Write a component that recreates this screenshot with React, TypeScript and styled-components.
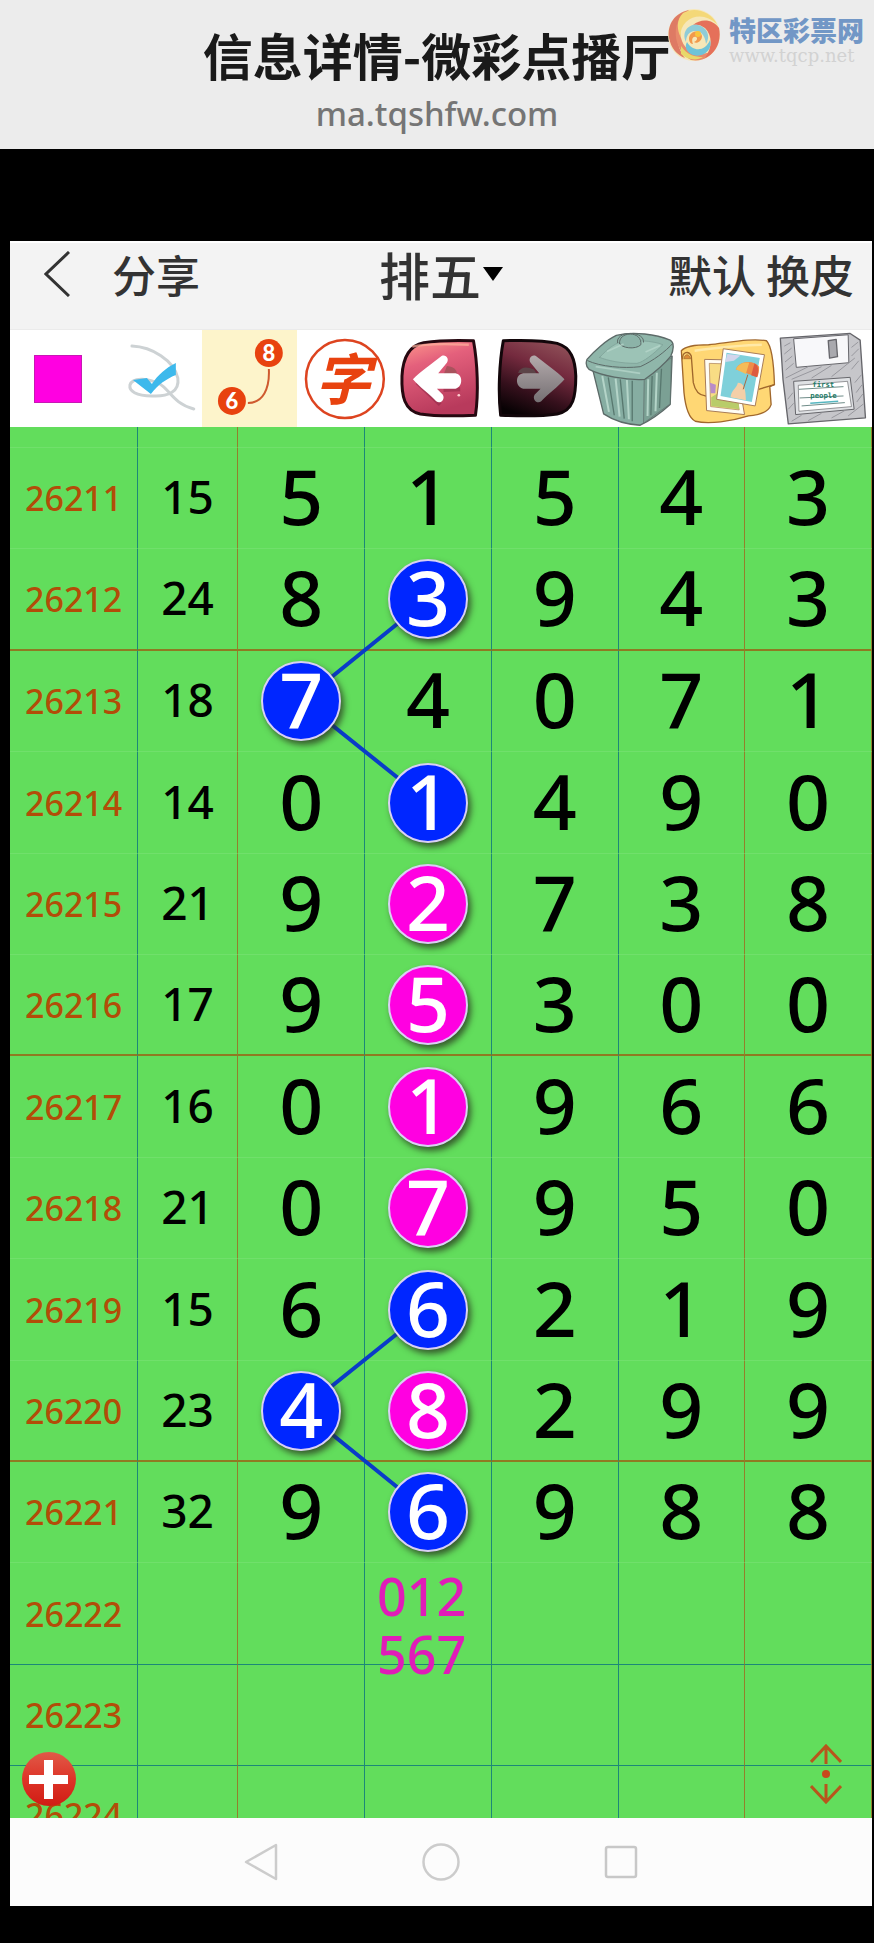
import React from "react";
import styled, { createGlobalStyle } from "styled-components";

const UI_FONT = `"Noto Sans", "Noto Sans CJK SC", sans-serif`;

const GlobalStyle = createGlobalStyle`
  * { box-sizing: border-box; }
  body { margin: 0; background: #000; font-family: ${UI_FONT}; }
  button { border: 0; padding: 0; margin: 0; background: none; font: inherit; color: inherit; cursor: pointer; }
`;

const PageHeader = styled.header`
  position: relative;
  display: flex;
  flex-direction: column;
  align-items: center;
  background: #ececec;
  padding: 22px 0 8px;
`;

const PageTitle = styled.h1`
  margin: 0;
  font-size: 50px;
  line-height: 64px;
  font-weight: 700;
  font-family: "Noto Sans CJK SC", sans-serif;
  color: #1a1a1a;
  white-space: nowrap;
`;

const PageUrl = styled.a`
  font-size: 33px;
  line-height: 55px;
  font-weight: 500;
  color: #757575;
  text-decoration: none;
`;

const Watermark = styled.div`
  position: absolute;
  top: 8px;
  right: 10px;
  display: flex;
  gap: 8px;
`;

const WatermarkText = styled.div`
  display: flex;
  flex-direction: column;
  padding-top: 6px;
`;

const WatermarkName = styled.span`
  font: 900 27px/32px "Noto Sans CJK SC", sans-serif;
  color: #7297c6;
`;

const WatermarkUrl = styled.span`
  font: 18px/20px "DejaVu Serif", serif;
  color: #d2d2d2;
`;

const Phone = styled.main`
  margin: 92px 2px 37px 10px;
  background: #fcfcfc;
`;

const TopBar = styled.nav`
  display: grid;
  grid-template-columns: 1fr auto 1fr;
  align-items: center;
  height: 89px;
  padding: 0 18px 24px;
  background: #f3f3f3;
  border-top: 2px solid #fff;
  border-bottom: 1px solid #ebebeb;
  color: #333;
  font-family: "Noto Sans CJK SC", sans-serif;
  font-size: 44px;
  font-weight: 500;
  line-height: 62px;
`;

const BarGroup = styled.div<{ $end?: boolean }>`
  display: flex;
  align-items: center;
  justify-content: ${(p) => (p.$end ? "flex-end" : "flex-start")};
  gap: ${(p) => (p.$end ? 10 : 42)}px;
  padding-left: ${(p) => (p.$end ? 0 : 16)}px;
`;

const BarButton = styled.button`
  display: flex;
  align-items: center;
  white-space: nowrap;
`;

const GameButton = styled(BarButton)`
  font-size: 51px;
  gap: 2px;
`;

const ToolBar = styled.div`
  display: grid;
  grid-template-columns: repeat(9, 1fr);
  background: #fff;
`;

const Tool = styled.button<{ $active?: boolean }>`
  display: flex;
  align-items: center;
  justify-content: center;
  height: 97px;
  background: ${(p) => (p.$active ? "#fdf4cb" : "transparent")};
  svg { display: block; width: 100%; height: 97px; }
`;

const ColorChip = styled.span`
  width: 48px;
  height: 48px;
  background: #ff00e1;
  border: 1px solid #c818b4;
`;

const Chart = styled.section`
  position: relative;
  background: #62dd5c;
  overflow: hidden;
`;

const Grid = styled.table`
  width: 100%;
  table-layout: fixed;
  border-collapse: separate;
  border-spacing: 0;
  text-align: center;
`;

const PeriodCol = styled.col`
  width: 14.8%;
`;

const SumCol = styled.col`
  width: 11.7%;
`;

const DigitCol = styled.col`
  width: 14.7%;
`;

type Line = "red" | "blue" | "soft";

const rowBorders: Record<Line, string> = {
  red: "2px solid #8f7a22",
  blue: "1px solid #1c8878",
  soft: "1px solid #70e06b",
};

const GridRow = styled.tr<{ $tall?: boolean; $line: Line }>`
  height: ${(p) => (p.$tall ? 102 : 101)}px;
  > * {
    border-bottom: ${(p) => rowBorders[p.$line]};
  }
`;

const TopRow = styled.tr`
  height: 21px;
  > * {
    border-bottom: ${rowBorders.soft};
  }
`;

const CutRow = styled.tr`
  height: 52px;
`;

const lineColors = { blue: "#1c8878", red: "#93802c" };

const Cell = styled.td<{ $edge: "blue" | "red" }>`
  position: relative;
  padding: 0;
  border-right: 1px solid ${(p) => lineColors[p.$edge]};
`;

const Period = styled.th`
  padding: 0 0 0 15px;
  border-right: 1px solid ${lineColors.blue};
  text-align: left;
  font-size: 34px;
  font-weight: 500;
  color: #b24d08;
`;

const CutPeriod = styled.div`
  height: 52px;
  overflow: hidden;
  line-height: 98px;
`;

const Sum = styled.span`
  display: block;
  padding-bottom: 4px;
  font-size: 46px;
  font-weight: 500;
  line-height: 60px;
`;

const Digit = styled.span`
  display: block;
  padding-bottom: 4px;
  font-size: 77px;
  line-height: 76px;
  font-weight: 500;
  color: #000;
`;

const Ball = styled(Digit)<{ $tone: string }>`
  position: relative;
  z-index: 2;
  width: 80px;
  height: 80px;
  margin: 0 auto;
  border: 2px solid #d9d0f4;
  border-radius: 50%;
  line-height: 72px;
  color: #fff;
  background: ${(p) => p.$tone};
  box-shadow: 3px 4px 6px rgba(40, 50, 30, 0.75);
`;

const Note = styled.div`
  position: absolute;
  z-index: 2;
  left: 12px;
  top: 4px;
  font-size: 52px;
  font-weight: 500;
  line-height: 58px;
  text-align: left;
  color: #e01cb8;
`;

const Links = styled.svg`
  position: absolute;
  z-index: 1;
  left: 0;
  top: 0;
  width: 100%;
  height: 100%;
  pointer-events: none;
`;

const AddButton = styled.button`
  position: absolute;
  z-index: 3;
  left: 12px;
  bottom: 12px;
  svg { display: block; }
`;

const ScrollButton = styled.button`
  position: absolute;
  z-index: 3;
  right: 30px;
  bottom: 14px;
  svg { display: block; }
`;

const SystemNav = styled.nav`
  display: flex;
  justify-content: center;
  height: 88px;
`;

const SystemButton = styled.button`
  display: flex;
  align-items: center;
  justify-content: center;
  width: 180px;
`;

const BLUE = "#0026ff";
const PINK = "#ff00e1";

type Row = { id: string; sum: string; digits: string; line: Line; balls?: Record<number, string> };

const rows: Row[] = [
  { id: "26211", sum: "15", digits: "51543", line: "soft" },
  { id: "26212", sum: "24", digits: "83943", line: "red", balls: { 1: BLUE } },
  { id: "26213", sum: "18", digits: "74071", line: "soft", balls: { 0: BLUE } },
  { id: "26214", sum: "14", digits: "01490", line: "soft", balls: { 1: BLUE } },
  { id: "26215", sum: "21", digits: "92738", line: "soft", balls: { 1: PINK } },
  { id: "26216", sum: "17", digits: "95300", line: "red", balls: { 1: PINK } },
  { id: "26217", sum: "16", digits: "01966", line: "soft", balls: { 1: PINK } },
  { id: "26218", sum: "21", digits: "07950", line: "soft", balls: { 1: PINK } },
  { id: "26219", sum: "15", digits: "66219", line: "soft", balls: { 1: BLUE } },
  { id: "26220", sum: "23", digits: "48299", line: "red", balls: { 0: BLUE, 1: PINK } },
  { id: "26221", sum: "32", digits: "96988", line: "soft", balls: { 1: BLUE } },
  { id: "26222", sum: "", digits: "     ", line: "blue" },
  { id: "26223", sum: "", digits: "     ", line: "blue" },
];

const digitEdges: ("blue" | "red")[] = ["blue", "blue", "blue", "red", "red"];

function LogoMark() {
  return (
    <svg width="54" height="54" viewBox="0 0 54 54" aria-hidden="true">
      <circle cx="27" cy="27" r="26" fill="#f6e7b8" />
      <path d="M22 2C8 5 0 16 2 30C4 40 10 47 18 50C8 38 7 16 22 2Z" fill="#de7a64" />
      <path d="M14 8C5 20 7 42 24 52C36 54 44 48 48 41C36 50 20 46 15 33C12 24 12 15 14 8Z" fill="#e88a6c" />
      <path d="M16 5C28 -2 44 4 50 16C40 7 28 6 19 14C14 19 13 25 14 30C9 20 10 11 16 5Z" fill="#f4d878" />
      <path d="M52 20C55 34 48 46 38 50C45 40 46 28 38 20C34 17 30 16 26 17C34 10 46 11 52 20Z" fill="#e5705a" />
      <path d="M20 34C26 44 38 44 43 32C46 42 36 50 26 47C20 45 17 39 20 34Z" fill="#6fc3d8" />
      <path d="M19 34C14 24 22 15 31 17C40 19 44 28 39 36C38 27 34 23 28 23C22 23 19 28 19 34Z" fill="#8fccd8" />
      <path d="M14 38C20 47 28 49 36 49C30 53 20 52 14 46Z" fill="#e8d86a" />
      <path d="M22 31C22 22 34 21 35 28C35 34 29 36 27 34C30 33 31 30 29 29C26 28 24 31 26 36C24 36 22 34 22 31Z" fill="#f29a4c" />
      <circle cx="31" cy="26" r="3" fill="#f9c53d" />
    </svg>
  );
}

function LassoIcon() {
  return (
    <svg viewBox="0 0 96 97" aria-hidden="true">
      <g fill="none" stroke="#cdd2d4" strokeWidth="3" strokeLinecap="round">
        <path d="M26 16C46 17 68 30 72 48C74 62 62 67 46 66C30 66 23 61 24 55C27 46 44 49 54 54C64 60 68 74 88 79" />
      </g>
      <path d="M27 50L41 48L46 54C52 45 60 38 70 33L70 45C60 49 52 55 45 64Z" fill="#3db9ec" />
    </svg>
  );
}

function LinkNumbersIcon() {
  return (
    <svg viewBox="0 0 96 97" aria-hidden="true">
      <path d="M67 39C68 59 61 73 46 73" fill="none" stroke="#cf5a30" strokeWidth="2" />
      <g fill="#e8420f">
        <circle cx="67" cy="23" r="14" />
        <circle cx="30" cy="71" r="14" />
      </g>
      <g fill="#fff" fontFamily="Lato, sans-serif" fontWeight="900" fontSize="22" textAnchor="middle">
        <text x="67" y="31">8</text>
        <text x="30" y="79">6</text>
      </g>
    </svg>
  );
}

function WordIcon() {
  return (
    <svg viewBox="0 0 96 97" aria-hidden="true">
      <circle cx="48" cy="49" r="39" fill="none" stroke="#dd4420" strokeWidth="2.5" />
      <text x="46" y="70" fontSize="56" fontWeight="700" fontStyle="italic" textAnchor="middle" fill="#e8420f" fontFamily='"Noto Sans CJK SC", sans-serif'>字</text>
    </svg>
  );
}

function UndoIcon() {
  return (
    <svg viewBox="-2 12 288 291" aria-hidden="true">
      <defs>
        <linearGradient id="undoFill" x1="0" y1="0" x2="0.3" y2="1">
          <stop offset="0" stopColor="#ff9a8c" />
          <stop offset="0.35" stopColor="#e4607c" />
          <stop offset="1" stopColor="#b83a5c" />
        </linearGradient>
      </defs>
      <path d="M240 44C190 42 130 44 90 50C50 58 28 90 25 150C23 210 32 254 80 264C130 272 200 270 246 268C256 200 252 110 240 44Z" fill="url(#undoFill)" stroke="#260810" strokeWidth="9" strokeLinejoin="round" />
      <path d="M56 62C100 50 170 54 226 56" fill="none" stroke="#ffb09c" strokeWidth="7" opacity="0.7" />
      <path d="M160 120C186 122 196 140 186 150L150 146Z" fill="#9c5358" opacity="0.8" />
      <path d="M70 170L140 236M150 192L200 190" stroke="#8c2644" strokeWidth="12" opacity="0.5" />
      <path d="M58 160C80 136 120 110 144 90C158 84 168 100 160 110L134 142H186C210 146 208 184 186 188H130L148 206C156 220 140 236 128 226C110 206 76 182 58 160Z" fill="#fff" />
      <circle cx="196" cy="208" r="4" fill="#ffd0d0" />
    </svg>
  );
}

function RedoIcon() {
  return (
    <svg viewBox="285 12 288 291" aria-hidden="true">
      <defs>
        <linearGradient id="redoFill" x1="0.7" y1="0" x2="0.3" y2="1">
          <stop offset="0" stopColor="#8f5058" />
          <stop offset="0.35" stopColor="#742a3e" />
          <stop offset="0.7" stopColor="#35101c" />
          <stop offset="1" stopColor="#080204" />
        </linearGradient>
        <linearGradient id="redoArrow" x1="0" y1="0" x2="0" y2="1">
          <stop offset="0" stopColor="#b4aaac" />
          <stop offset="1" stopColor="#757073" />
        </linearGradient>
      </defs>
      <path d="M328 44C390 42 450 42 490 52C532 64 544 100 546 150C546 210 540 254 490 264C440 272 370 270 320 268C312 200 316 110 328 44Z" fill="url(#redoFill)" stroke="#12060a" strokeWidth="9" strokeLinejoin="round" />
      <path d="M372 140C382 120 400 122 420 130L430 146Z" fill="#5c4448" />
      <path d="M512 160C490 136 450 110 426 90C412 84 402 100 410 110L436 142H388C362 146 364 184 388 188H440L422 206C414 220 430 236 442 226C460 206 494 182 512 160Z" fill="url(#redoArrow)" />
    </svg>
  );
}

function TrashIcon() {
  return (
    <svg viewBox="14 12 288 291" aria-hidden="true">
      <g stroke="#5c6a68" strokeWidth="4" strokeLinejoin="round" strokeLinecap="round">
        <path d="M38 134L70 264C100 284 140 296 180 298C214 282 246 258 270 236L276 90Z" fill="#86ada2" />
        <path d="M192 156L190 292L270 234L274 96Z" fill="#7ba094" strokeWidth="2" />
        <path d="M20 100C40 76 78 42 108 28C160 14 230 26 270 42C284 50 280 74 272 90C250 118 216 144 194 160C140 164 60 148 26 130C18 122 16 110 20 100Z" fill="#8fb6aa" />
        <path d="M22 104C60 122 130 128 180 122C220 104 256 76 278 52" fill="none" strokeWidth="3" />
        <path d="M58 94C84 66 100 56 120 48C160 40 220 44 248 56C220 84 190 108 170 112C120 112 84 104 58 94Z" fill="#9cc3b6" stroke="#799c92" strokeWidth="2" />
        <path d="M118 52C122 66 166 72 182 56C184 36 170 24 150 24C130 24 116 36 118 52Z" fill="#8cb3a8" strokeWidth="3" />
        <path d="M112 50C108 34 126 22 150 22C176 22 192 34 190 48" fill="none" strokeWidth="3" />
      </g>
      <path d="M84 154L102 268M120 160L132 278M156 164V286M216 150L212 268M244 128L238 246" stroke="#58786f" strokeWidth="4" fill="none" />
      <path d="M66 150L86 258M106 158L118 272M140 162L146 280M204 160L202 270M230 140L226 256" stroke="#b4d4c8" strokeWidth="6" fill="none" />
      <path d="M46 122L180 142M80 76L130 54M196 78L240 58" stroke="#b9d8cd" strokeWidth="5" fill="none" opacity="0.7" />
    </svg>
  );
}

function GalleryIcon() {
  return (
    <svg viewBox="14 12 288 291" aria-hidden="true">
      <g stroke="#a0672c" strokeWidth="4" strokeLinejoin="round">
        <path d="M18 74C30 60 60 56 100 56C170 48 230 36 274 44C288 58 296 110 298 176L284 182L288 236C280 260 250 268 220 270C170 286 100 296 60 286C40 276 30 240 26 200Z" fill="#ffd774" />
        <path d="M22 100C20 78 40 72 48 90L54 170C60 198 72 208 90 210L110 214" fill="none" />
        <path d="M298 176L250 190" fill="none" />
        <path d="M26 98C28 82 42 82 46 98Z" fill="#dc8c38" strokeWidth="2" />
      </g>
      <path d="M58 74C110 66 220 56 260 56" stroke="#ffe9a8" strokeWidth="7" fill="none" />
      <g stroke="#a87c58" strokeWidth="3">
        <path d="M88 100L180 102L208 266L94 254Z" fill="#fffdf4" />
        <path d="M102 112L170 114L192 252L106 242Z" fill="#f8dc84" strokeWidth="2" />
      </g>
      <path d="M108 214L130 200L190 226L192 250L108 240Z" fill="#b9cc6a" />
      <path d="M104 170L122 176L120 202L106 202Z" fill="#b98cc8" />
      <path d="M144 68L268 86L240 240L124 220Z" fill="#fff" stroke="#a87c58" strokeWidth="3" />
      <path d="M154 80L254 96L230 228L136 210Z" fill="#7fd0da" />
      <path d="M156 84L196 88L176 104L150 108Z" fill="#d3d5ec" />
      <path d="M166 214C168 192 184 188 188 170C206 170 212 188 212 223Z" fill="#f4cfa8" />
      <path d="M182 130C190 104 236 100 252 122C252 136 250 146 246 154Z" fill="#ee8c48" />
      <path d="M182 130C190 112 208 108 222 110L212 144Z" fill="#f4bc58" />
      <path d="M238 112C250 118 252 134 246 154L228 148Z" fill="#dc5a40" />
      <path d="M218 146L204 190" stroke="#a86840" strokeWidth="3" />
    </svg>
  );
}

function SaveIcon() {
  return (
    <svg viewBox="13 12 288 291" aria-hidden="true">
      <g stroke="#66666b" strokeWidth="4" strokeLinejoin="round">
        <path d="M26 36L236 22L266 42L282 276L50 294L34 160Z" fill="#c6c6ca" />
        <path d="M66 38L230 26L232 110L74 124Z" fill="#f8f8fa" strokeWidth="3" />
        <path d="M66 166L236 154L248 250L72 266Z" fill="#dfe1e4" strokeWidth="3" />
        <path d="M80 178L228 166L240 242L82 256Z" fill="#fff" strokeWidth="2" />
        <path d="M170 44L194 40L198 92L174 96Z" fill="#a9a9ae" />
      </g>
      <g stroke="#98989e" strokeWidth="3">
        <path d="M38 60L56 50M38 84L60 66M40 108L62 90M42 132L66 112M42 156L110 122M60 160L150 122M120 156L180 118M180 152L250 96M240 130L262 104M240 90L262 68M240 64L260 48M250 170L270 146M254 200L272 176M256 228L274 204M60 286L90 268M110 284L150 262M180 276L220 254M230 270L276 234M48 220L64 200M50 250L66 232" />
      </g>
      <path d="M82 190L216 182M84 216L216 210M90 240L220 230" stroke="#6e8c88" strokeWidth="3" />
      <path d="M116 232L200 226" stroke="#56b6c0" strokeWidth="5" />
      <g fill="#1f7c68" fontFamily='"DejaVu Sans Mono", monospace' fontWeight="700" fontSize="22">
        <text x="122" y="184">first</text>
        <text x="116" y="217">people</text>
      </g>
    </svg>
  );
}

const tools = [
  { name: "颜色", icon: <ColorChip /> },
  { name: "选择", icon: <LassoIcon /> },
  { name: "连线", icon: <LinkNumbersIcon />, active: true },
  { name: "文字", icon: <WordIcon /> },
  { name: "撤销", icon: <UndoIcon /> },
  { name: "重做", icon: <RedoIcon /> },
  { name: "清空", icon: <TrashIcon /> },
  { name: "图库", icon: <GalleryIcon /> },
  { name: "保存", icon: <SaveIcon /> },
];

export default function App() {
  return (
    <>
      <GlobalStyle />
      <PageHeader>
        <PageTitle>信息详情-微彩点播厅</PageTitle>
        <PageUrl href="#">ma.tqshfw.com</PageUrl>
        <Watermark>
          <LogoMark />
          <WatermarkText>
            <WatermarkName>特区彩票网</WatermarkName>
            <WatermarkUrl>www.tqcp.net</WatermarkUrl>
          </WatermarkText>
        </Watermark>
      </PageHeader>

      <Phone>
        <TopBar>
          <BarGroup>
            <BarButton aria-label="返回">
              <svg width="26" height="46" viewBox="0 0 26 46" fill="none" stroke="#333" strokeWidth="3">
                <path d="M25 1L2 23L25 45" />
              </svg>
            </BarButton>
            <BarButton>分享</BarButton>
          </BarGroup>
          <GameButton>
            排五
            <svg width="20" height="14" viewBox="0 0 20 14" aria-hidden="true">
              <path d="M0 0H20L10 14Z" fill="#000" />
            </svg>
          </GameButton>
          <BarGroup $end>
            <BarButton>默认</BarButton>
            <BarButton>换皮</BarButton>
          </BarGroup>
        </TopBar>

        <ToolBar role="toolbar">
          {tools.map((t) => (
            <Tool key={t.name} aria-label={t.name} $active={t.active}>
              {t.icon}
            </Tool>
          ))}
        </ToolBar>

        <Chart>
          <Grid>
            <colgroup>
              <PeriodCol />
              <SumCol />
              <DigitCol span={5} />
            </colgroup>
            <tbody>
              <TopRow aria-hidden="true">
                <Cell $edge="blue" />
                <Cell $edge="red" />
                {digitEdges.map((e, j) => (
                  <Cell key={j} $edge={e} />
                ))}
              </TopRow>
              {rows.map((r, i) => (
                <GridRow key={r.id} $tall={i % 5 === 1 || i % 5 === 3} $line={r.line}>
                  <Period scope="row">{r.id}</Period>
                  <Cell $edge="red">
                    <Sum>{r.sum}</Sum>
                  </Cell>
                  {[...r.digits].map((d, j) => (
                    <Cell key={j} $edge={digitEdges[j]}>
                      {r.balls?.[j] ? <Ball $tone={r.balls[j]}>{d}</Ball> : d.trim() && <Digit>{d}</Digit>}
                      {r.id === "26222" && j === 1 && (
                        <Note>
                          012
                          <br />
                          567
                        </Note>
                      )}
                    </Cell>
                  ))}
                </GridRow>
              ))}
              <CutRow>
                <Period scope="row">
                  <CutPeriod>26224</CutPeriod>
                </Period>
                <Cell $edge="red" />
                {digitEdges.map((e, j) => (
                  <Cell key={j} $edge={e} />
                ))}
              </CutRow>
            </tbody>
          </Grid>
          <Links viewBox="0 0 862 1391" preserveAspectRatio="none" aria-hidden="true">
            <path d="M418 172L292 274L418 375M418 882L292 983L418 1085" fill="none" stroke="#0a3cc8" strokeWidth="4" />
          </Links>
          <AddButton aria-label="添加">
            <svg width="54" height="54" viewBox="0 0 54 54">
              <defs>
                <linearGradient id="addFill" x1="0" y1="0" x2="0" y2="1">
                  <stop offset="0" stopColor="#e05a48" />
                  <stop offset="0.5" stopColor="#de3428" />
                  <stop offset="1" stopColor="#d01c14" />
                </linearGradient>
              </defs>
              <circle cx="27" cy="27" r="27" fill="url(#addFill)" />
              <path d="M22 8H31V23H46V32H31V47H22V32H7V23H22Z" fill="#fff" />
            </svg>
          </AddButton>
          <ScrollButton aria-label="上下滚动">
            <svg width="32" height="60" viewBox="0 0 32 60" fill="none" stroke="#b8551c" strokeWidth="3">
              <path d="M1 18L16 2L31 18M16 2V20M1 42L16 58L31 42M16 40V58" />
              <circle cx="16" cy="30" r="4" fill="#c8481c" stroke="none" />
            </svg>
          </ScrollButton>
        </Chart>

        <SystemNav>
          <SystemButton aria-label="后退">
            <svg width="36" height="40" viewBox="0 0 36 40" fill="none" stroke="#ccc" strokeWidth="2.5" strokeLinejoin="round">
              <path d="M33 3V37L3 20Z" />
            </svg>
          </SystemButton>
          <SystemButton aria-label="主页">
            <svg width="38" height="38" viewBox="0 0 38 38" fill="none" stroke="#ccc" strokeWidth="2.5">
              <circle cx="19" cy="19" r="17.5" />
            </svg>
          </SystemButton>
          <SystemButton aria-label="最近任务">
            <svg width="34" height="34" viewBox="0 0 34 34" fill="none" stroke="#c8c8c8" strokeWidth="2.5">
              <rect x="2" y="2" width="30" height="30" rx="2" />
            </svg>
          </SystemButton>
        </SystemNav>
      </Phone>
    </>
  );
}
